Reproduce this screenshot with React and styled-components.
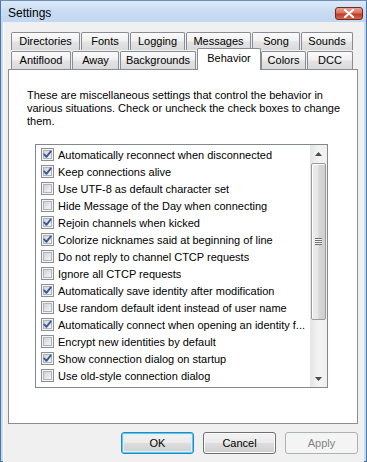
import React from 'react'
import styled, {createGlobalStyle, css} from 'styled-components'

const GlobalStyle = createGlobalStyle`
  html, body {
    margin: 0;
    padding: 0;
    background: #ffffff;
  }
  body {
    font-family: "Liberation Sans", Arial, sans-serif;
    font-size: 11px;
    color: #000000;
  }
`

const UI_FONT = `"Liberation Sans", Arial, sans-serif`

const StyledWindow = styled.div`
  width: 367px;
  height: 462px;
  box-sizing: border-box;
  display: flex;
  flex-direction: column;
  background: #c6daf1;
  border: 1px solid #4a76a8;
  border-top-color: #6d8fb6;
  font-family: ${UI_FONT};
`

const StyledTitleBar = styled.div`
  height: 21px;
  flex: none;
  display: flex;
  align-items: center;
  justify-content: space-between;
  padding: 0 3px 0 7px;
  background: linear-gradient(to bottom, #dce9f7 0%, #c9dcf2 50%, #c1d6f0 100%);
`

const StyledTitle = styled.span`
  font-size: 12px;
  color: #000000;
  padding-top: 2px;
`

const StyledCloseButton = styled.div`
  width: 28px;
  height: 13px;
  margin-top: 3px;
  box-sizing: border-box;
  border: 1px solid #6d2a21;
  border-radius: 3px;
  background: linear-gradient(to bottom, #e8a395 0%, #d9715f 45%, #c23a23 55%, #d5674f 100%);
  display: flex;
  align-items: center;
  justify-content: center;
`

const StyledClient = styled.div`
  flex: 1;
  margin: 0 2px 1px 2px;
  background: #f0f0f0;
  border-left: 1px solid #ffffff;
  display: flex;
  flex-direction: column;
  padding: 9px 6px 8px 4px;
  box-sizing: border-box;
`

const StyledTabArea = styled.div`
  display: flex;
  flex-direction: column;
  padding-left: 3px;
`

const StyledTabRow = styled.div`
  display: flex;
  align-items: flex-end;
  height: ${props => (props.front ? '19px' : '19px')};
  margin-top: ${props => (props.front ? '0' : '0')};
  position: relative;
  z-index: ${props => (props.front ? 2 : 1)};
`

const StyledTab = styled.div`
  width: ${props => props.w}px;
  height: 18px;
  box-sizing: border-box;
  margin-right: 1px;
  border: 1px solid #898c95;
  border-bottom: none;
  border-radius: 2px 2px 0 0;
  background: linear-gradient(to bottom, #fbfbfb 0%, #f0f0f0 45%, #e3e3e3 55%, #dadada 100%);
  display: flex;
  align-items: center;
  justify-content: center;
  font-size: 11px;
  color: #000000;
  white-space: nowrap;
  padding-bottom: 1px;

  ${props =>
    props.selected &&
    css`
      height: 22px;
      margin-right: 0;
      margin-bottom: -1px;
      background: #ffffff;
      padding-bottom: 4px;
      position: relative;
      z-index: 3;
    `}
`

const StyledPanel = styled.div`
  height: 355px;
  box-sizing: border-box;
  background: #ffffff;
  border: 1px solid #898c95;
  padding: 19px 0 0 18px;
  position: relative;
  z-index: 1;
`

const StyledDescription = styled.p`
  margin: 0;
  font-size: 11px;
  line-height: 13px;
  color: #000000;
`

const StyledList = styled.div`
  width: 293px;
  height: 244px;
  box-sizing: border-box;
  margin: 16px 0 0 8px;
  border: 1px solid #828790;
  display: flex;
  background: #ffffff;
`

const StyledRows = styled.div`
  flex: 1;
  min-width: 0;
  padding-top: 1px;
  overflow: hidden;
`

const StyledRow = styled.div`
  height: 17px;
  display: flex;
  align-items: center;
  padding-left: 5px;
  gap: 4px;
  font-size: 11px;
  white-space: nowrap;
  overflow: hidden;
`

const StyledLabel = styled.span`
  overflow: hidden;
  text-overflow: ellipsis;
`

const StyledScrollbar = styled.div`
  width: 17px;
  flex: none;
  display: flex;
  flex-direction: column;
  background: linear-gradient(to right, #e5e5e5 0%, #f3f3f3 50%, #f0f0f0 100%);
`

const StyledArrow = styled.div`
  height: 17px;
  flex: none;
  display: flex;
  align-items: center;
  justify-content: center;
`

const StyledTrack = styled.div`
  flex: 1;
  padding: 1px 1px 0 1px;
  display: flex;
  flex-direction: column;
`

const StyledThumb = styled.div`
  height: 157px;
  box-sizing: border-box;
  border: 1px solid #9a9a9a;
  border-radius: 2px;
  background: linear-gradient(to right, #ececec 0%, #e6e6e6 45%, #d6d6d6 55%, #cfcfcf 100%);
  box-shadow: inset 1px 1px 0 #ffffff;
  display: flex;
  align-items: center;
  justify-content: center;
`

const StyledGrip = styled.div`
  width: 7px;
  height: 7px;
  background: repeating-linear-gradient(
    to bottom,
    #6f6f6f 0px,
    #6f6f6f 1px,
    #f6f6f6 1px,
    #f6f6f6 2px
  );
`

const StyledButtonBar = styled.div`
  display: flex;
  justify-content: flex-end;
  gap: 9px;
  margin-top: 8px;
  padding-right: 0;
`

const StyledButton = styled.div`
  width: 73px;
  height: 22px;
  box-sizing: border-box;
  border: 1px solid #707070;
  border-radius: 3px;
  background: linear-gradient(to bottom, #f2f2f2 0%, #ebebeb 48%, #dddddd 52%, #cfcfcf 100%);
  box-shadow: inset 0 0 0 1px #fbfbfb;
  display: flex;
  align-items: center;
  justify-content: center;
  font-size: 11px;
  color: #000000;

  ${props =>
    props.primary &&
    css`
      border-color: #3c7fb1;
      box-shadow: inset 0 0 0 1px #48d1ff, inset 0 0 0 2px #d9f2fc;
    `}

  ${props =>
    props.disabled &&
    css`
      border-color: #adb2b5;
      background: #f4f4f4;
      box-shadow: none;
      color: #838383;
    `}
`

const tabRows = [
  [
    {label: 'Directories', w: 69},
    {label: 'Fonts', w: 48},
    {label: 'Logging', w: 55},
    {label: 'Messages', w: 65},
    {label: 'Song', w: 48},
    {label: 'Sounds', w: 52},
  ],
  [
    {label: 'Antiflood', w: 60},
    {label: 'Away', w: 47},
    {label: 'Backgrounds', w: 76},
    {label: 'Behavior', w: 64, selected: true},
    {label: 'Colors', w: 45},
    {label: 'DCC', w: 46},
  ],
]

const options = [
  {label: 'Automatically reconnect when disconnected', checked: true},
  {label: 'Keep connections alive', checked: true},
  {label: 'Use UTF-8 as default character set', checked: false},
  {label: 'Hide Message of the Day when connecting', checked: false},
  {label: 'Rejoin channels when kicked', checked: true},
  {label: 'Colorize nicknames said at beginning of line', checked: true},
  {label: 'Do not reply to channel CTCP requests', checked: false},
  {label: 'Ignore all CTCP requests', checked: false},
  {label: 'Automatically save identity after modification', checked: true},
  {label: 'Use random default ident instead of user name', checked: false},
  {label: 'Automatically connect when opening an identity f...', checked: true},
  {label: 'Encrypt new identities by default', checked: false},
  {label: 'Show connection dialog on startup', checked: true},
  {label: 'Use old-style connection dialog', checked: false},
]

const CloseGlyph = () => (
  <svg width="12" height="9" viewBox="0 0 12 9">
    <path d="M2 1 L10 8 M10 1 L2 8" stroke="#ffffff" strokeWidth="2.2" strokeLinecap="round" />
  </svg>
)

const CheckBox = ({checked}) => (
  <svg width="13" height="13" viewBox="0 0 13 13" style={{flex: 'none'}}>
    <defs>
      <linearGradient id="cbInner" x1="0" y1="0" x2="1" y2="1">
        <stop offset="0" stopColor="#cdd1d6" />
        <stop offset="1" stopColor="#f7f7f7" />
      </linearGradient>
    </defs>
    <rect x="0.5" y="0.5" width="12" height="12" fill="#f4f4f4" stroke="#8e8f8f" />
    <rect x="2.5" y="2.5" width="8" height="8" fill="url(#cbInner)" stroke="#b0b4ba" />
    {checked && (
      <path
        d="M3.2 6.4 L5.4 8.8 L9.8 3.4"
        fill="none"
        stroke="#3c5a99"
        strokeWidth="1.9"
        strokeLinecap="round"
        strokeLinejoin="round"
      />
    )}
  </svg>
)

const Triangle = ({down}) => (
  <svg width="7" height="4" viewBox="0 0 7 4">
    <path d={down ? 'M0 0 H7 L3.5 4 Z' : 'M0 4 H7 L3.5 0 Z'} fill="#4a4a4a" />
  </svg>
)

const App = () => (
  <>
    <GlobalStyle />
    <StyledWindow>
      <StyledTitleBar>
        <StyledTitle>Settings</StyledTitle>
        <StyledCloseButton>
          <CloseGlyph />
        </StyledCloseButton>
      </StyledTitleBar>
      <StyledClient>
        <StyledTabArea>
          {tabRows.map((row, i) => (
            <StyledTabRow key={`row-${i}`} front={i === 1}>
              {row.map(tab => (
                <StyledTab key={tab.label} w={tab.w} selected={tab.selected}>
                  {tab.label}
                </StyledTab>
              ))}
            </StyledTabRow>
          ))}
        </StyledTabArea>
        <StyledPanel>
          <StyledDescription>
            These are miscellaneous settings that control the behavior in
            <br />
            various situations. Check or uncheck the check boxes to change
            <br />
            them.
          </StyledDescription>
          <StyledList>
            <StyledRows>
              {options.map(option => (
                <StyledRow key={option.label}>
                  <CheckBox checked={option.checked} />
                  <StyledLabel>{option.label}</StyledLabel>
                </StyledRow>
              ))}
            </StyledRows>
            <StyledScrollbar>
              <StyledArrow>
                <Triangle />
              </StyledArrow>
              <StyledTrack>
                <StyledThumb>
                  <StyledGrip />
                </StyledThumb>
              </StyledTrack>
              <StyledArrow>
                <Triangle down />
              </StyledArrow>
            </StyledScrollbar>
          </StyledList>
        </StyledPanel>
        <StyledButtonBar>
          <StyledButton primary>OK</StyledButton>
          <StyledButton>Cancel</StyledButton>
          <StyledButton disabled>Apply</StyledButton>
        </StyledButtonBar>
      </StyledClient>
    </StyledWindow>
  </>
)

export default App
